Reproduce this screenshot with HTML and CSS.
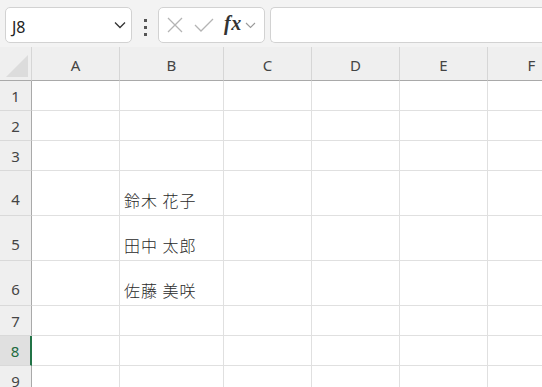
FILE: index.html
```html
<!DOCTYPE html>
<html lang="ja">
<head>
    <meta charset="UTF-8">
    <title>Sheet</title>
    <link rel="stylesheet" href="styles.css">
</head>
<body>
    <div class="toolbar">
        <div class="name-box">
            <span>J8</span>
            <svg width="12" height="8" viewBox="0 0 12 8"><path d="M1 1.5 L6 6.5 L11 1.5" fill="none" stroke="#333" stroke-width="1.3"/></svg>
        </div>
        <div class="dots"><i></i><i></i><i></i></div>
        <div class="fx-box">
            <svg width="16" height="16" viewBox="0 0 16 16"><path d="M1 1 L15 15 M15 1 L1 15" stroke="#b4b4b4" stroke-width="1.3"/></svg>
            <svg width="20" height="14" viewBox="0 0 20 14"><path d="M1 7 L7 13 L19 1" fill="none" stroke="#b4b4b4" stroke-width="1.3"/></svg>
            <span class="fx">fx</span>
            <svg width="11" height="7" viewBox="0 0 11 7"><path d="M1 1 L5.5 5.5 L10 1" fill="none" stroke="#9a9a9a" stroke-width="1.1"/></svg>
        </div>
        <div class="formula"></div>
    </div>

    <div class="sheet">
        <div class="corner"><span class="tri"></span></div>
        <div class="col-head">A</div>
        <div class="col-head">B</div>
        <div class="col-head">C</div>
        <div class="col-head">D</div>
        <div class="col-head">E</div>
        <div class="col-head">F</div>

        <div class="row-head">1</div><div class="cell"></div><div class="cell"></div><div class="cell"></div><div class="cell"></div><div class="cell"></div><div class="cell"></div>
        <div class="row-head">2</div><div class="cell"></div><div class="cell"></div><div class="cell"></div><div class="cell"></div><div class="cell"></div><div class="cell"></div>
        <div class="row-head">3</div><div class="cell"></div><div class="cell"></div><div class="cell"></div><div class="cell"></div><div class="cell"></div><div class="cell"></div>
        <div class="row-head tall">4</div><div class="cell"></div><div class="cell text">鈴木 花子</div><div class="cell"></div><div class="cell"></div><div class="cell"></div><div class="cell"></div>
        <div class="row-head tall">5</div><div class="cell"></div><div class="cell text">田中 太郎</div><div class="cell"></div><div class="cell"></div><div class="cell"></div><div class="cell"></div>
        <div class="row-head tall">6</div><div class="cell"></div><div class="cell text">佐藤 美咲</div><div class="cell"></div><div class="cell"></div><div class="cell"></div><div class="cell"></div>
        <div class="row-head">7</div><div class="cell"></div><div class="cell"></div><div class="cell"></div><div class="cell"></div><div class="cell"></div><div class="cell"></div>
        <div class="row-head active">8</div><div class="cell"></div><div class="cell"></div><div class="cell"></div><div class="cell"></div><div class="cell"></div><div class="cell"></div>
        <div class="row-head">9</div><div class="cell"></div><div class="cell"></div><div class="cell"></div><div class="cell"></div><div class="cell"></div><div class="cell"></div>
    </div>
</body>
</html>
```

FILE: styles.css
```css
body {
    margin: 0;
    font-family: "Noto Sans", "Noto Sans CJK JP", sans-serif;
    background: #fff;
    overflow: hidden;
}
.toolbar {
    height: 47px;
    box-sizing: border-box;
    padding: 7px 0 0 5px;
    background: #f3f3f3;
    display: flex;
    align-items: flex-start;
}
.name-box, .fx-box, .formula {
    height: 36px;
    box-sizing: border-box;
    background: #fff;
    border: 1px solid #d2d2d2;
    border-radius: 5px;
}
.name-box {
    width: 127px;
    display: flex;
    align-items: center;
    justify-content: space-between;
    padding: 0 5px 0 6px;
    font-size: 16px;
    color: #222;
}
.name-box span {
    margin-top: 3px;
}
.dots {
    width: 26px;
    display: flex;
    flex-direction: column;
    align-items: center;
    gap: 4px;
    padding-top: 12px;
}
.dots i {
    width: 3px;
    height: 3px;
    background: #555;
}
.fx-box {
    width: 107px;
    display: flex;
    align-items: center;
    padding: 0 4px 0 8px;
}
.fx-box svg:first-child {
    margin-right: 11px;
}
.fx-box svg:nth-child(2) {
    margin-right: 10px;
    margin-top: -1px;
}
.fx {
    font-family: "Liberation Serif", serif;
    font-style: italic;
    font-weight: bold;
    font-size: 20px;
    color: #333;
    margin-right: 3px;
    margin-top: -3px;
    letter-spacing: 0.5px;
}
.formula {
    flex: 1;
    margin-left: 5px;
    border-right: none;
    border-radius: 5px 0 0 5px;
}
.sheet {
    display: grid;
    grid-template-columns: 32px 88px 104px 88px 88px 88px 88px;
    grid-template-rows: 34px 30px 30px 30px 45px 45px 45px 30px 30px 30px;
}
.sheet > div {
    box-sizing: border-box;
}
.corner {
    background: #efefef;
    border-right: 1px solid #d6d6d6;
    border-bottom: 1px solid #a9a9a9;
    position: relative;
}
.tri {
    position: absolute;
    right: 3px;
    bottom: 3px;
    width: 22px;
    height: 22px;
    background: #dcdcdc;
    clip-path: polygon(100% 0, 100% 100%, 0 100%);
}
.col-head {
    background: #efefef;
    border-right: 1px solid #d6d6d6;
    border-bottom: 1px solid #a9a9a9;
    display: flex;
    align-items: center;
    justify-content: center;
    font-size: 15px;
    color: #444;
    padding-top: 2px;
}
.row-head {
    background: #efefef;
    border-right: 1px solid #a9a9a9;
    border-bottom: 1px solid #d9d9d9;
    display: flex;
    align-items: center;
    justify-content: center;
    font-size: 15px;
    color: #444;
}
.row-head.tall {
    align-items: flex-end;
    padding-bottom: 6px;
}
.row-head.active {
    background: #e0e0e0;
    border-right: 2px solid #217346;
    color: #1d6b40;
}
.cell {
    border-right: 1px solid #e0e0e0;
    border-bottom: 1px solid #e0e0e0;
}
.cell.text {
    display: flex;
    align-items: flex-end;
    padding: 0 0 3px 4px;
    font-family: "Noto Sans CJK JP", sans-serif;
    font-weight: 300;
    font-size: 16px;
    letter-spacing: 1px;
    color: #2a2a2a;
}
```
